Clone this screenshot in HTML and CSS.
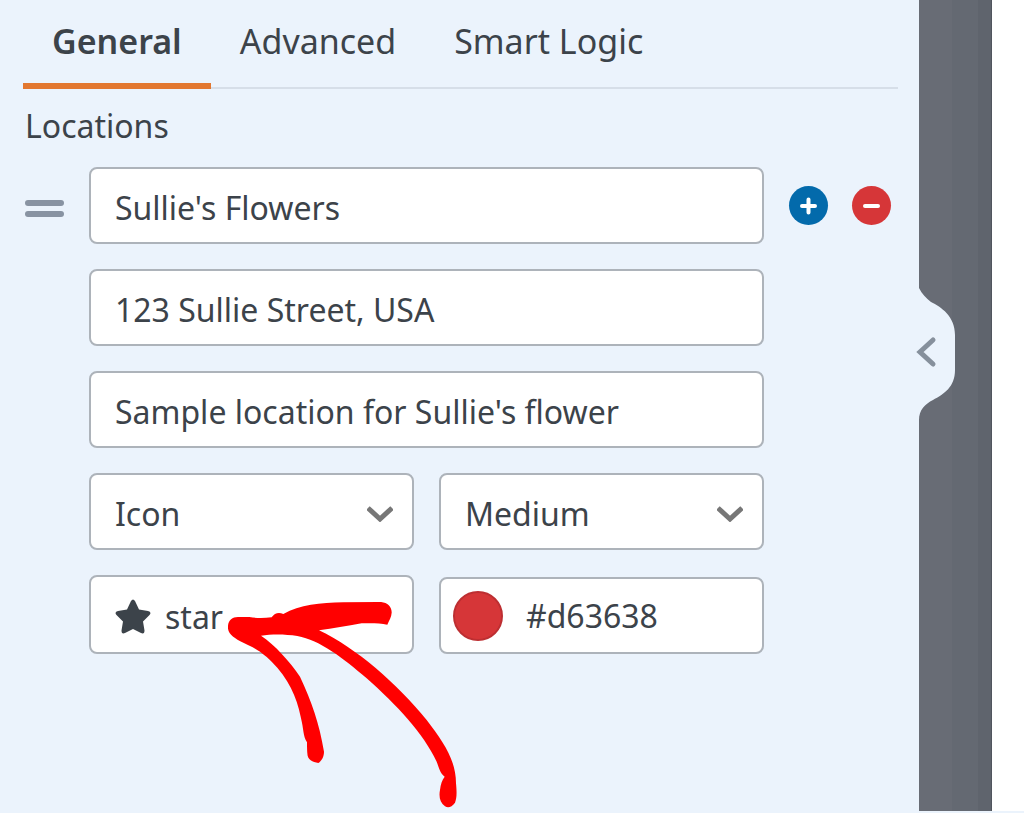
FILE: index.html
```
<!DOCTYPE html>
<html lang="en">
<head>
    <meta charset="utf-8">
    <title>Field Options</title>
    <link rel="stylesheet" href="styles.css">
</head>
<body>
    <div class="builder">
        <div class="panel">
            <nav class="tabs">
                <a href="#general" class="tab active">General</a>
                <a href="#advanced" class="tab">Advanced</a>
                <a href="#logic" class="tab">Smart Logic</a>
            </nav>

            <fieldset class="locations">
                <legend>Locations</legend>
                <div class="location">
                    <button type="button" class="drag" aria-label="Move location">
                        <span class="bar"></span>
                        <span class="bar"></span>
                    </button>

                    <div class="fields">
                        <input type="text" class="control" aria-label="Name" value="Sullie's Flowers">
                        <input type="text" class="control" aria-label="Address" value="123 Sullie Street, USA">
                        <input type="text" class="control" aria-label="Description" value="Sample location for Sullie's flower">
                        <div class="row">
                            <div class="select">
                                <select class="control" aria-label="Marker type">
                                    <option>Icon</option>
                                    <option>Image</option>
                                </select>
                                <svg class="arrow" viewBox="0 0 26 16"><path d="M1 2l12 11L25 2"/></svg>
                            </div>
                            <div class="select">
                                <select class="control" aria-label="Marker size">
                                    <option>Small</option>
                                    <option selected>Medium</option>
                                    <option>Large</option>
                                </select>
                                <svg class="arrow" viewBox="0 0 26 16"><path d="M1 2l12 11L25 2"/></svg>
                            </div>
                        </div>
                        <div class="row">
                            <div class="picker">
                                <button type="button" class="control icon-choice">
                                    <svg class="star" viewBox="0 0 36 35"><path d="M16 2Q18-1 20 2L24 10.500L33 12Q37 13 34.500 16L28 22.500L29.500 31.500Q29.500 35.500 26 34L18 30L10 34Q6.500 35.500 6.500 31.500L8 22.500L1.500 16Q-1 13 3 12L12 10.500Z"/></svg>
                                    <span>star</span>
                                </button>
                                <svg class="pointer" viewBox="54 66 690 618"><path d="M54 146C52 122 66 110 86 111L118 111C140 115 160 115 185 112C194 99 206 96 220 102C270 74 330 69 400 67L505 66C530 64 546 80 545 98C544 112 538 120 532 134C510 129 480 129 455 130C410 138 370 145 327 151C440 205 560 310 650 420C700 485 738 540 738 610C741 640 740 655 735 668C725 680 716 686 705 679C690 668 686 650 690 630C692 612 696 600 704 590C690 580 686 560 680 545C640 460 560 375 470 295C400 235 330 180 262 168C225 162 185 162 153 167C195 195 240 245 270 290C305 365 328 430 342 515C342 530 335 542 325 549C308 547 292 540 292 520C291 505 291 490 291 487C278 465 282 450 272 410C260 350 235 295 185 245C150 210 125 200 100 188C75 175 57 165 54 146Z"/></svg>
                            </div>
                            <div class="control color">
                                <input type="color" class="swatch" aria-label="Pick color" value="#d63638">
                                <input type="text" class="hex" aria-label="Color value" value="#d63638">
                            </div>
                        </div>
                    </div>

                    <div class="actions">
                        <button type="button" class="round add" aria-label="Add location">
                            <svg viewBox="0 0 39 39"><path d="M13 20h13M19.500 13.500v13"/></svg>
                        </button>
                        <button type="button" class="round remove" aria-label="Remove location">
                            <svg viewBox="0 0 39 39"><path d="M13 20h13"/></svg>
                        </button>
                    </div>
                </div>
            </fieldset>

            <button type="button" class="collapse" aria-label="Collapse panel">
                <svg viewBox="0 0 46 132">
                    <path class="bump" d="M0 0H9C12 6 16 10 21 14C31 19 45 28 45 47V82C45 99 34 106 23 112C15 116 9 122 9 132H0Z"/>
                    <path class="chevron" d="M23 52L10 64L23 76"/>
                </svg>
            </button>
        </div>
        <div class="backdrop"></div>
        <div class="preview"></div>
    </div>
</body>
</html>
```
FILE: styles.css
```
* {
    box-sizing: border-box;
}

body {
    margin: 0;
    background: #ebf3fc;
    color: #3c434a;
    font-family: "Segoe UI", "Noto Sans", sans-serif;
    font-size: 32px;
    line-height: 44px;
}

button, input, select {
    font: inherit;
    color: inherit;
}

button {
    padding: 0;
    border: none;
    background: none;
    cursor: pointer;
}

svg {
    display: block;
    fill: none;
}

.builder {
    display: flex;
    min-height: 100vh;
}

.panel {
    position: relative;
    flex: 1;
    min-width: 0;
    padding: 0 21px 24px 23px;
}

.tabs {
    display: flex;
    height: 89px;
    border-bottom: 2px solid #d6dee8;
    font-size: 34px;
}

.tab {
    height: 89px;
    padding: 19px 29px 0;
    color: inherit;
    text-decoration: none;
}

.tab.active {
    border-bottom: 6px solid #e27730;
    font-weight: 600;
}

.locations {
    min-width: 0;
    margin: 0;
    padding: 0 7px 0 2px;
    border: none;
}

.locations legend {
    padding: 15px 0 19px;
}

.location {
    display: flex;
    align-items: flex-start;
    gap: 25px;
}

.drag {
    display: flex;
    flex-direction: column;
    gap: 5px;
    width: 39px;
    padding-top: 33px;
    cursor: grab;
}

.bar {
    width: 39px;
    height: 6px;
    border-radius: 3px;
    background: #8893a2;
}

.fields {
    display: flex;
    flex: 1;
    flex-direction: column;
    gap: 25px;
    min-width: 0;
}

.row {
    display: grid;
    grid-template-columns: repeat(2, minmax(0, 1fr));
    align-items: end;
    gap: 25px;
}

.control {
    width: 100%;
    height: 77px;
    padding: 4px 24px 0;
    border: 2px solid #adb3ba;
    border-radius: 8px;
    background: #fff;
}

.select, .picker {
    position: relative;
}

.select select {
    display: block;
    appearance: none;
}

.arrow {
    position: absolute;
    top: 33px;
    right: 21px;
    width: 26px;
    height: 16px;
    pointer-events: none;
    stroke: #777;
    stroke-width: 5;
}

.icon-choice {
    display: flex;
    align-items: center;
    gap: 14px;
    height: 79px;
}

.star {
    width: 36px;
    height: 35px;
    fill: #3c434a;
}

/* hand-drawn arrow over the icon picker */
.pointer {
    position: absolute;
    z-index: 1;
    top: 27px;
    left: 139px;
    width: 230px;
    height: 206px;
    fill: #f00;
    pointer-events: none;
}

.color {
    display: flex;
    align-items: center;
    gap: 23px;
    padding: 0 12px;
}

.swatch {
    flex: none;
    width: 50px;
    height: 50px;
    padding: 0;
    border: 2px solid #bd2f32;
    border-radius: 50%;
    background: #d63638;
    appearance: none;
    cursor: pointer;
}

.swatch::-webkit-color-swatch-wrapper {
    padding: 0;
}

.swatch::-webkit-color-swatch {
    border: none;
    border-radius: 50%;
}

.hex {
    flex: 1;
    min-width: 0;
    padding: 0;
    border: none;
    background: none;
}

.actions {
    display: flex;
    gap: 24px;
    padding-top: 19px;
}

.round {
    width: 39px;
    height: 39px;
    border-radius: 50%;
    stroke: #fff;
    stroke-width: 4;
    stroke-linecap: round;
}

.add {
    background: #036aab;
}

.remove {
    background: #d63638;
}

.collapse {
    position: absolute;
    z-index: 1;
    top: 288px;
    right: -37px;
    width: 46px;
    height: 132px;
}

.bump {
    fill: #ebf3fc;
}

.chevron {
    stroke: #86909c;
    stroke-width: 5;
    stroke-linecap: round;
}

.backdrop {
    width: 73px;
    margin-bottom: 2px;
    border-right: 1px solid #50555e;
    background: linear-gradient(to right, #686c75 33px, #646972 33px, #646972 59px, #5f646d 59px);
}

.preview {
    width: 32px;
    margin-bottom: 2px;
    background: #fff;
}
```
